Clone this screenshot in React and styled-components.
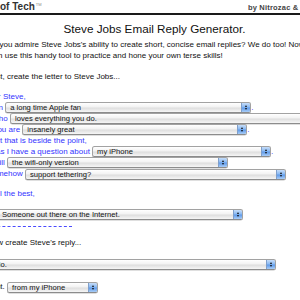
import React from 'react';
import styled, { createGlobalStyle } from 'styled-components';

const GlobalStyle = createGlobalStyle`
  html, body { margin: 0; padding: 0; background: #fff; overflow: hidden; }
  body { font-family: "Liberation Sans", Arial, sans-serif; }
`;

const Viewport = styled.div`
  width: 300px;
  height: 300px;
  overflow: hidden;
`;

// the page is scrolled a little to the right, so its left edge sits off screen
const Page = styled.div`
  width: 335px;
  margin-left: -13px;
  font-size: 8px;
  color: #111;
`;

const Header = styled.div`
  display: flex;
  align-items: flex-end;
  height: 13px;
  border-bottom: 2px solid #1a1a1a;
`;

const Logo = styled.div`
  margin-left: -7px;
  font-size: 10px;
  font-weight: bold;
  color: #333;
  line-height: 12px;
  sup {
    font-size: 4px;
    font-weight: normal;
    color: #888;
    margin-left: 1px;
  }
`;

const Byline = styled.div`
  margin-left: auto;
  margin-right: -7px;
  font-size: 7.5px;
  font-weight: bold;
  color: #444;
  line-height: 11px;
  letter-spacing: 0.2px;
`;

const Title = styled.h1`
  margin: 7px 0 0;
  font-size: 11.7px;
  font-weight: normal;
  text-align: center;
  color: #111;
  line-height: 14px;
`;

const Intro = styled.p`
  margin: 4px 0 0;
  line-height: 10.5px;
`;

const Step = styled.p`
  margin: ${p => p.$top}px 0 0;
  line-height: 10px;
`;

const Letter = styled.div`
  color: #3333ff;
`;

const Line = styled.div`
  margin-top: ${p => p.$top || 0}px;
  margin-left: ${p => p.$indent || 0}px;
  height: 11.1px;
  line-height: 11.1px;
  white-space: nowrap;
`;

const Select = styled.div`
  display: inline-flex;
  vertical-align: middle;
  width: ${p => p.$w}px;
  height: 9px;
  align-items: center;
  border: 1px solid #a2a2a2;
  border-bottom-color: #8c8c8c;
  border-radius: 2.5px;
  background: linear-gradient(#ffffff, #f2f2f2 45%, #dedede 55%, #f6f6f6);
  box-shadow: 0 0.5px 0.5px rgba(0, 0, 0, 0.25);
  color: #111;
  font-size: 7.6px;
  overflow: hidden;
  span {
    flex: 1;
    padding-left: 4px;
    line-height: 9px;
  }
`;

const Arrow = styled.div`
  flex: none;
  width: 8px;
  height: 9px;
  border-left: 1px solid #7f9fcb;
  background: linear-gradient(#c6ddf9, #8ab9f2 45%, #5f9ae9 55%, #a9cdf7);
  display: flex;
  flex-direction: column;
  align-items: center;
  justify-content: center;
  gap: 1px;
  i {
    display: block;
    width: 0;
    height: 0;
    border-left: 1.5px solid transparent;
    border-right: 1.5px solid transparent;
  }
  i:first-child { border-bottom: 2px solid #111; }
  i:last-child { border-top: 2px solid #111; }
`;

const Dashes = styled.div`
  width: 85px;
  margin-top: 6.5px;
  border-top: 1px dashed #4a4aff;
`;

const Pick = ({ w, children }) => (
  <Select $w={w}>
    <span>{children}</span>
    <Arrow><i /><i /></Arrow>
  </Select>
);

const App = () => (
  <Viewport>
    <GlobalStyle />
    <Page>
      <Header>
        <Logo>Joy of Tech<sup>TM</sup></Logo>
        <Byline>by Nitrozac &amp; Snaggy</Byline>
      </Header>

      <Title>Steve Jobs Email Reply Generator.</Title>

      <Intro>
        Do you admire Steve Jobs's ability to create short, concise email replies? We do too! Now
        <br />
        then use this handy tool to practice and hone your own terse skills!
      </Intro>

      <Step $top={11}>First, create the letter to Steve Jobs...</Step>

      <Letter>
        <Line $top={8.5} $indent={-3.6}>Dear Steve,</Line>
        <Line $indent={-25.9}>I have been <Pick w={244}>a long time Apple fan</Pick>.</Line>
        <Line $indent={6.1}>who <Pick w={300}>loves everything you do.</Pick></Line>
        <Line $indent={5.8}>You are <Pick w={223}>insanely great</Pick>.</Line>
        <Line $indent={3.2}>But that is beside the point,</Line>
        <Line $indent={9}>as I have a question about <Pick w={177}>my iPhone</Pick>.</Line>
        <Line $indent={5}>Will <Pick w={219}>the wifi-only version</Pick></Line>
        <Line $indent={1.5}>somehow <Pick w={259}>support tethering?</Pick></Line>
        <Line $top={9.2} $indent={6}>All the best,</Line>
        <Line $top={8.9} $indent={10}><Pick w={244}>Someone out there on the Internet.</Pick></Line>
        <Dashes />
      </Letter>

      <Step $top={11}>Now create Steve's reply...</Step>

      <Line $top={10.5} $indent={3}><Pick w={284}>No.</Pick></Line>
      <Line $top={11.5} $indent={-0.9}>Sent. <Pick w={89}>from my iPhone</Pick></Line>
    </Page>
  </Viewport>
);

export default App;
